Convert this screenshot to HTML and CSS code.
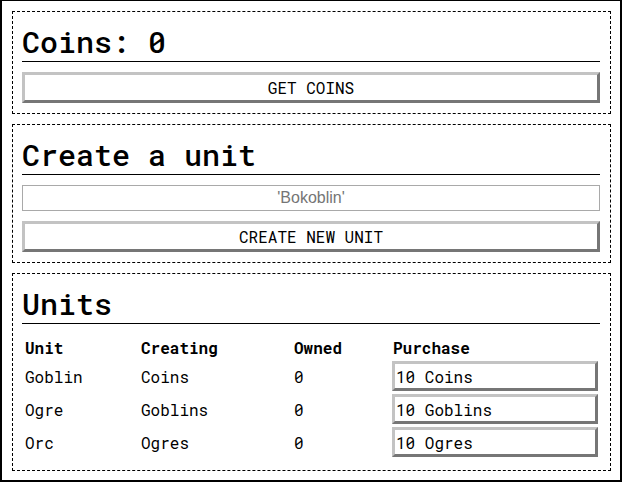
FILE: index.html
```html
<!DOCTYPE html>
<html>
<head>
<meta charset="utf-8">
<link rel="stylesheet" href="styles.css">
</head>
<body>
<div class="page">
  <section class="panel">
    <h1 class="title">Coins: 0</h1>
    <button class="btn wide">GET COINS</button>
  </section>
  <section class="panel">
    <h1 class="title">Create a unit</h1>
    <input class="field" type="text" placeholder="'Bokoblin'">
    <button class="btn wide">CREATE NEW UNIT</button>
  </section>
  <section class="panel last">
    <h1 class="title">Units</h1>
    <div class="units">
      <div class="cell head">Unit</div>
      <div class="cell head">Creating</div>
      <div class="cell head">Owned</div>
      <div class="cell head">Purchase</div>

      <div class="cell">Goblin</div>
      <div class="cell">Coins</div>
      <div class="cell">0</div>
      <div class="cell buy"><button class="btn small">10 Coins</button></div>

      <div class="cell">Ogre</div>
      <div class="cell">Goblins</div>
      <div class="cell">0</div>
      <div class="cell buy"><button class="btn small">10 Goblins</button></div>

      <div class="cell">Orc</div>
      <div class="cell">Ogres</div>
      <div class="cell">0</div>
      <div class="cell buy"><button class="btn small">10 Ogres</button></div>
    </div>
  </section>
</div>
</body>
</html>
```

FILE: styles.css
```css
* { box-sizing: border-box; }
html, body { margin: 0; padding: 0; background: #fff; }
body {
  font-family: "Roboto Mono", "DejaVu Sans Mono", monospace;
  font-size: 16px;
  color: #000;
}
.page {
  width: 622px;
  height: 482px;
  border-style: solid;
  border-color: #000;
  border-width: 1px 2px 2px 2px;
  overflow: hidden;
}
.panel {
  border: 1px dashed #000;
  margin: 10px 9px 0 10px;
  padding: 0 10px 10px 9px;
  display: flex;
  flex-direction: column;
}
.panel.last { padding-bottom: 13px; }
.title {
  margin: 0;
  font-size: 30px;
  font-weight: 500;
  line-height: 36px;
  padding: 12px 0 1px 0;
  border-bottom: 1px solid #000;
}
.btn {
  font-family: "Roboto Mono", "DejaVu Sans Mono", monospace;
  font-size: 16px;
  color: #000;
  background: #fff;
  border-style: solid;
  border-width: 3px;
  border-color: #c3c3c3 #767676 #767676 #c3c3c3;
  margin: 0;
  padding: 0;
}
.btn.wide {
  margin-top: 10px;
  height: 31px;
  width: 100%;
  text-align: center;
}
.field {
  margin-top: 10px;
  height: 26px;
  width: 100%;
  border: 1px solid #a9a9a9;
  font-family: "Liberation Sans", Arial, sans-serif;
  font-size: 16px;
  text-align: center;
  padding: 0;
}
.field::placeholder { color: #757575; }
.units {
  margin-top: 12px;
  display: grid;
  grid-template-columns: 116px 153px 99px 1fr;
  grid-auto-rows: 30px;
  grid-template-rows: 22px;
  row-gap: 3px;
}
.cell {
  display: flex;
  align-items: center;
  padding-left: 3px;
  white-space: nowrap;
}
.cell.head { font-weight: bold; }
.cell.buy { padding: 0 2px; }
.btn.small {
  width: 100%;
  height: 30px;
  text-align: left;
  padding-left: 1px;
}
```
